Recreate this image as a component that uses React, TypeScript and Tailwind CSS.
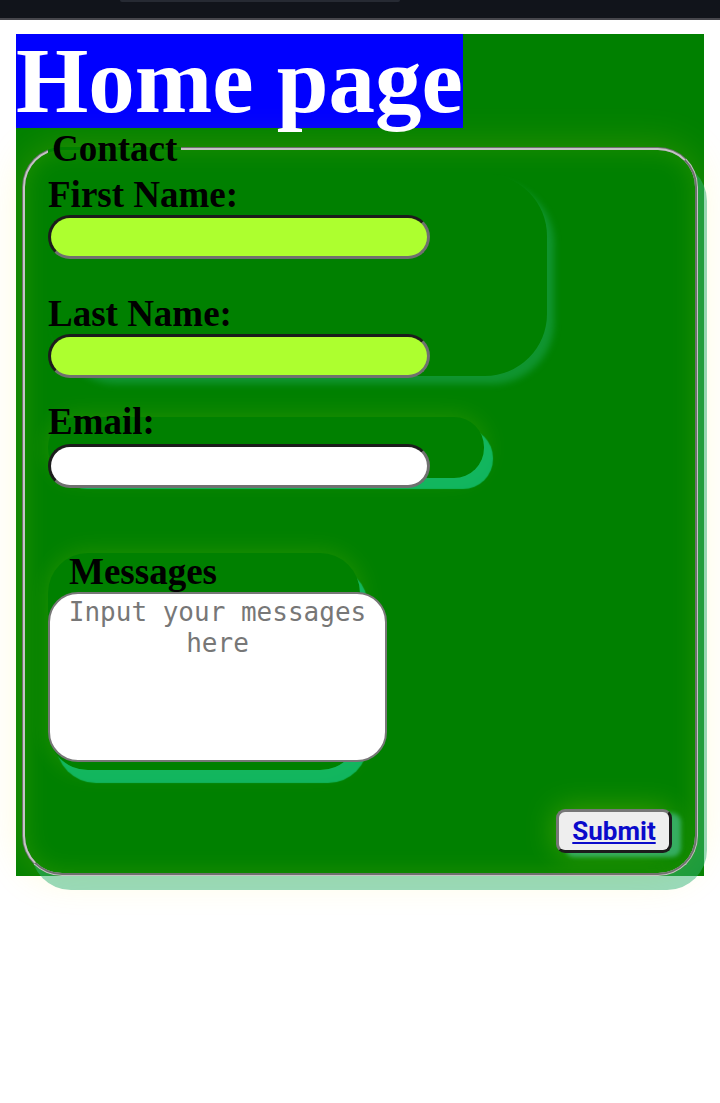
export default function App() {
  return (
    <div className="min-h-[1103px] bg-white">
      {/* browser chrome strip */}
      <div className="h-[18px] bg-[#11141b]">
        <div className="ml-[120px] h-[2px] w-[280px] rounded-b-full bg-[#262a33]" />
      </div>
      <div className="h-[2px] bg-[#46464c]" />

      <div className="px-4 pt-[14px]">
        <div className="bg-[#008000]">
          <h1 className="w-fit bg-[#0000ff] font-['Liberation_Serif',serif] text-[93px] font-bold leading-[94px] text-white">
            Home page
          </h1>

          <form onSubmit={(e) => e.preventDefault()}>
            <fieldset className="mx-[6px] rounded-[40px] border-[3px] border-[#c4c4c4] [border-style:groove] px-[23px] pt-[5px] pb-[20px] font-['Liberation_Serif',serif] shadow-[9px_14px_0_rgba(52,180,120,0.5),0_0_40px_rgba(255,230,0,0.18),inset_0_0_24px_rgba(255,255,0,0.12)]">
              <legend className="px-[4px] text-[37px] font-bold leading-[41px] text-black">Contact</legend>

              {/* name group */}
              <div className="flow-root h-[202px] w-[499px] rounded-[62px] shadow-[7px_8px_7px_rgba(40,180,120,0.4)]">
                <label className="block text-[37px] font-bold leading-[41px] text-black">First Name:</label>
                <input
                  type="text"
                  className="block h-[44px] w-[382px] rounded-full border-[3px] border-t-[#1c1c1c] border-l-[#1c1c1c] border-r-[#707070] border-b-[#707070] bg-[#adff2f] outline-none"
                />
                <div className="h-[34px]" />
                <label className="block text-[37px] font-bold leading-[41px] text-black">Last Name:</label>
                <input
                  type="text"
                  className="block h-[44px] w-[382px] rounded-full border-[3px] border-t-[#1c1c1c] border-l-[#1c1c1c] border-r-[#707070] border-b-[#707070] bg-[#adff2f] outline-none"
                />
              </div>

              {/* email group */}
              <div className="mt-[41px] flow-root h-[61px] w-[436px] rounded-[30px] shadow-[9px_11px_1px_rgba(20,190,110,0.85),0_0_24px_rgba(255,255,0,0.14)]">
                <label className="-mt-[16px] block text-[37px] font-bold leading-[41px] text-black">Email:</label>
                <input
                  type="email"
                  className="mt-[2px] block h-[44px] w-[382px] rounded-full border-[3px] border-t-[#1c1c1c] border-l-[#1c1c1c] border-r-[#707070] border-b-[#707070] bg-white outline-none"
                />
              </div>

              {/* messages group */}
              <div className="mt-[75px] flow-root h-[217px] w-[312px] rounded-[40px] shadow-[8px_13px_1px_rgba(20,190,110,0.85),0_0_24px_rgba(255,255,0,0.14)]">
                <label className="-mt-[2px] block pl-[21px] text-[37px] font-bold leading-[41px] text-black">Messages</label>
                <textarea
                  placeholder="Input your messages here"
                  className="block h-[170px] w-[339px] resize-none rounded-[30px] border-2 border-[#777] bg-white px-[2px] pt-[3px] text-center font-['DejaVu_Sans_Mono',monospace] text-[26px] leading-[31px] text-black outline-none placeholder:text-[#777]"
                />
              </div>

              <div className="mt-[39px] flex justify-end">
                <button
                  type="submit"
                  className="h-[44px] w-[116px] rounded-[9px] border-[3px] border-t-[#777] border-l-[#777] border-r-[#1c1c1c] border-b-[#1c1c1c] bg-[#eeeeee] font-['Roboto',sans-serif] text-[26px] font-bold text-[#0a0acb] underline shadow-[9px_4px_4px_rgba(60,179,113,0.85),0_0_30px_rgba(255,255,0,0.25)]"
                >
                  Submit
                </button>
              </div>
            </fieldset>
          </form>
        </div>
      </div>
    </div>
  );
}
